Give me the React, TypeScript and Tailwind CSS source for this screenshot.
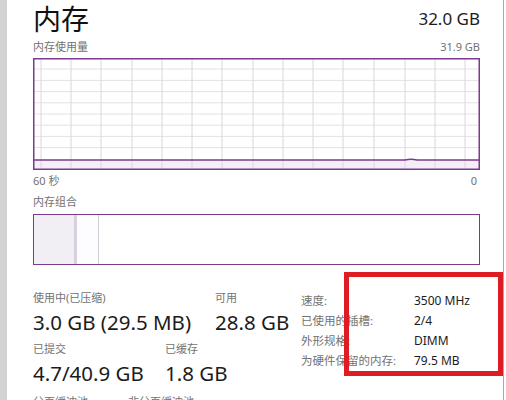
import React from "react";

const font = { fontFamily: '"Noto Sans", "Noto Sans CJK SC", sans-serif' };

const vLines = [8, 38, 68, 99, 129, 159, 189, 220, 250, 280, 310, 341, 372, 402, 432];
const hLines = [11, 22.4, 33.6, 44.8, 56, 67.2, 78.4, 89.6];

function UsageGraph() {
  return (
    <svg width="447" height="112" viewBox="0 0 447 112" className="block">
      <rect x="0" y="0" width="447" height="112" fill="#ffffff" />
      <rect x="0" y="102" width="447" height="10" fill="#f4eef6" />
      {hLines.map((y) => (
        <line key={y} x1="0" x2="447" y1={y} y2={y} stroke="#e6dfe8" strokeWidth="1" />
      ))}
      {vLines.map((x) => (
        <line key={x} x1={x} x2={x} y1="0" y2="112" stroke="#dcd6de" strokeWidth="1" />
      ))}
      <path d="M0 102 L372 102 Q378 100.5 384 102 L447 102" fill="none" stroke="#7b3a8c" strokeWidth="1.4" />
      <rect x="0.75" y="0.75" width="445.5" height="110.5" fill="none" stroke="#7b3a8c" strokeWidth="1.5" />
    </svg>
  );
}

function Stat({ label, value, className }: { label: string; value: string; className: string }) {
  return (
    <div className={className}>
      <div className="text-[11px] leading-[16px] text-[#727272]">{label}</div>
      <div className="mt-[3px] text-[20.5px] leading-[26px] text-[#1b1b1b]">{value}</div>
    </div>
  );
}

const details: [string, string][] = [
  ["速度:", "3500 MHz"],
  ["已使用的插槽:", "2/4"],
  ["外形规格:", "DIMM"],
  ["为硬件保留的内存:", "79.5 MB"],
];

export default function App() {
  return (
    <div className="relative flex h-[400px] w-[506px] overflow-hidden bg-white" style={font}>
      <div className="w-[7px] shrink-0 bg-[#d2d2d2]" />
      <div className="w-[473px] shrink-0 pl-[26px]">
        <div className="flex items-start justify-between">
          <h1 className="text-[28px] leading-[38px] font-normal text-[#111]">内存</h1>
          <span className="mt-[7px] text-[17px] leading-[24px] text-[#1b1b1b]">32.0 GB</span>
        </div>
        <div className="mt-[1px] flex justify-between text-[11px] leading-[16px] text-[#727272]">
          <span>内存使用量</span>
          <span>31.9 GB</span>
        </div>
        <div className="mt-[3px]">
          <UsageGraph />
        </div>
        <div className="mt-[3px] flex justify-between pr-[3px] text-[11px] leading-[16px] text-[#727272]">
          <span>60 秒</span>
          <span>0</span>
        </div>
        <div className="mt-[5px] text-[11px] leading-[16px] text-[#727272]">内存组合</div>
        <div className="mt-[4px] flex h-[51px] border-[1.5px] border-[#7b3a8c]">
          <div className="w-[40px] bg-[#f1eff4]" />
          <div className="w-[3px] bg-[#d8cfe0]" />
          <div className="w-[21px] bg-[#fdfcfe]" />
          <div className="w-px bg-[#cfcbd2]" />
          <div className="flex-1 bg-white" />
        </div>
        <div className="mt-[25px] flex">
          <div className="w-[268px] shrink-0">
            <div className="flex">
              <Stat className="w-[182px]" label="使用中(已压缩)" value="3.0 GB (29.5 MB)" />
              <Stat className="" label="可用" value="28.8 GB" />
            </div>
            <div className="mt-[6px] flex">
              <Stat className="w-[132px]" label="已提交" value="4.7/40.9 GB" />
              <Stat className="" label="已缓存" value="1.8 GB" />
            </div>
            <div className="mt-[8px] flex text-[11px] leading-[16px] text-[#727272]">
              <span className="w-[95px]">分页缓冲池</span>
              <span>非分页缓冲池</span>
            </div>
          </div>
          <div className="mt-[1px] shrink-0">
            {details.map(([k, v]) => (
              <div key={k} className="flex h-[20px] items-center">
                <span className="w-[113px] text-[11.5px] text-[#727272]">{k}</span>
                <span className="text-[12px] text-[#1b1b1b]">{v}</span>
              </div>
            ))}
          </div>
        </div>
      </div>
      <div className="ml-[23px] w-px shrink-0 bg-[#a9a9a9]" />
      <div className="pointer-events-none absolute left-[344px] top-[272px] h-[104px] w-[159px] border-[5px] border-[#dd1c24]" />
    </div>
  );
}
